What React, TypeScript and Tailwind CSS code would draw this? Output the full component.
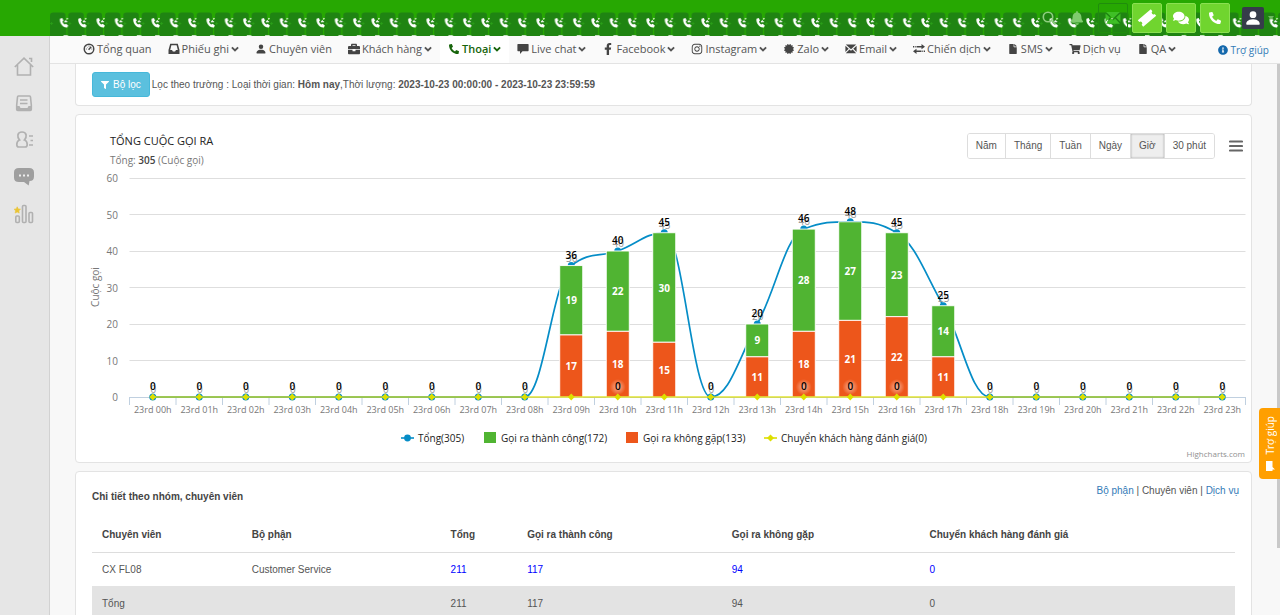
import { useState, type ReactNode } from 'react';
import {
  FaBell,
  FaBriefcase,
  FaCertificate,
  FaComments,
  FaExchangeAlt,
  FaFacebookF,
  FaFile,
  FaFilter,
  FaInfoCircle,
  FaInstagram,
  FaPhoneAlt,
  FaShoppingCart,
} from 'react-icons/fa';
import { BsPersonFill } from 'react-icons/bs';

interface NavItem {
  label: string;
  icon: ReactNode;
  hasMenu?: boolean;
  active?: boolean;
}

interface HourPoint {
  ok: number;
  missed: number;
  showRated: boolean;
}

function GaugeIcon() {
  return (
    <svg viewBox="0 0 12 12" className="w-3 h-3" fill="none" stroke="currentColor">
      <circle cx="6" cy="6" r="4.8" strokeWidth="1.4" />
      <path d="M5.6 6.8 L8.2 3.8" strokeWidth="1.4" />
      <path d="M2.8 6h1 M3.8 3.8l.6.6 M6 2.6v1 M8.4 6h.9" strokeWidth=".9" />
    </svg>
  );
}

function TrayIcon() {
  return (
    <svg viewBox="0 0 12 12" className="w-3 h-3" fill="currentColor" fillRule="evenodd">
      <path d="M2.2.8h7.600L11.500 7v4H.5V7zM3.400 2.200 2.200 7H4l.9 1.600h2.200L8 7h1.800L8.600 2.200z" />
    </svg>
  );
}

function BubbleIcon() {
  return (
    <svg viewBox="0 0 12 12" className="w-3 h-3" fill="currentColor">
      <path d="M1 1h10a.6.6 0 0 1 .6.6v6a.6.6 0 0 1-.6.6H5.5L3 11V8.200H1a.6.6 0 0 1-.6-.6v-6A.6.6 0 0 1 1 1z" />
    </svg>
  );
}

function MailIcon({ className = 'w-3 h-3' }: { className?: string }) {
  return (
    <svg viewBox="0 0 12 12" className={className} fill="currentColor">
      <path d="M.8 1.500h10.400L6 6.300zM.4 2.700l3.300 3L.4 9zM11.600 2.700l-3.300 3L11.600 9zM4.400 6.400 6 7.800l1.600-1.400 3.600 3.900H.8z" />
    </svg>
  );
}

function TransferIcon() {
  return (
    <svg viewBox="0 0 12 12" className="w-3 h-3" fill="currentColor">
      <path d="M3.500 3h5V1L12 3.800 8.500 6.200V4.500h-5zM0 3h1v1.500H0zM1.700 3h1v1.500h-1zM8.500 7.500h-5v-1.700L0 8.300 3.500 11V9h5zM11 7.500h1V9h-1zM9.300 7.500h1V9h-1z" />
    </svg>
  );
}

function ChevronIcon() {
  return (
    <svg viewBox="0 0 8 8" className="w-2 h-2" fill="none" stroke="currentColor" strokeWidth="1.900">
      <path d="M.9 2.400 4 5.500l3.100-3.100" />
    </svg>
  );
}

function TicketIcon() {
  return (
    <svg viewBox="0 0 20 20" className="w-5 h-5" fill="currentColor">
      <path
        transform="rotate(-40 10 10)"
        d="M1.500 5.800h17v2.400a1.800 1.800 0 0 0 0 3.600v2.400h-17v-2.400a1.800 1.800 0 0 0 0-3.600z"
      />
    </svg>
  );
}

// Repeating call tiles behind the right part of the top bar
function HeaderPattern() {
  return (
    <svg className="absolute top-3 right-0 w-[calc(100%-50px)] h-6" aria-hidden="true">
      <defs>
        <pattern id="calls" width="18.33" height="24" patternUnits="userSpaceOnUse">
          <path d="M0 3.500a3 3 0 0 1 3-3h9.500a3 3 0 0 1 3 3V24H0z" fill="#1f8412" />
          <path d="M15.500 8h2.830v16h-2.830z" fill="#1f8412" />
          <path d="M17 14v9" stroke="#27a703" strokeWidth="1.200" />
          <path d="M0 11.500h3M1.500 10v3" stroke="#2a9f17" strokeWidth=".8" />
          <path
            d="M10 6.800l2.200-.8 1.300 2.500-1 1.100c.4 1.400 1.100 2.300 2.300 3l1.300-.8 2.100 1.600-.9 2c-4.200.8-8.100-4.300-7.300-8.600z"
            fill="#fff"
          />
          <path d="M14.600 10.200 16 8.200M15 9.800h2.500M16.800 7.400l.9-1.200" stroke="#fff" strokeWidth="1.100" />
          <path d="M13.500 23.600h4.500" stroke="#e9f6e5" strokeWidth=".9" />
        </pattern>
      </defs>
      <rect width="100%" height="24" fill="url(#calls)" />
    </svg>
  );
}

const NAV_ITEMS: NavItem[] = [
  { label: 'Tổng quan', icon: <GaugeIcon /> },
  { label: 'Phiếu ghi', icon: <TrayIcon />, hasMenu: true },
  { label: 'Chuyên viên', icon: <BsPersonFill className="w-3 h-3" /> },
  { label: 'Khách hàng', icon: <FaBriefcase className="w-3 h-3" />, hasMenu: true },
  { label: 'Thoại', icon: <FaPhoneAlt className="w-3 h-2.5" />, hasMenu: true, active: true },
  { label: 'Live chat', icon: <BubbleIcon />, hasMenu: true },
  { label: 'Facebook', icon: <FaFacebookF className="w-3 h-3" />, hasMenu: true },
  { label: 'Instagram', icon: <FaInstagram className="w-3 h-3" />, hasMenu: true },
  { label: 'Zalo', icon: <FaCertificate className="w-3 h-2.5" />, hasMenu: true },
  { label: 'Email', icon: <MailIcon />, hasMenu: true },
  { label: 'Chiến dịch', icon: <TransferIcon />, hasMenu: true },
  { label: 'SMS', icon: <FaFile className="w-3 h-2.5" />, hasMenu: true },
  { label: 'Dịch vụ', icon: <FaShoppingCart className="w-3 h-2.5" /> },
  { label: 'QA', icon: <FaFile className="w-3 h-2.5" />, hasMenu: true },
];

const RANGES = ['Năm', 'Tháng', 'Tuần', 'Ngày', 'Giờ', '30 phút'];

const CALLS: Record<number, HourPoint> = {
  9: { ok: 19, missed: 17, showRated: false },
  10: { ok: 22, missed: 18, showRated: true },
  11: { ok: 30, missed: 15, showRated: false },
  13: { ok: 9, missed: 11, showRated: false },
  14: { ok: 28, missed: 18, showRated: true },
  15: { ok: 27, missed: 21, showRated: true },
  16: { ok: 23, missed: 22, showRated: true },
  17: { ok: 14, missed: 11, showRated: false },
};

const HOURS = Array.from({ length: 24 }, (_, hour) => ({
  hour,
  ...(CALLS[hour] || { ok: 0, missed: 0, showRated: true }),
}));

const PLOT_LEFT = 53.5;
const PLOT_RIGHT = 1169.5;
const BASE = 232;
const STEP = 46.5;

const xOf = (hour: number) => PLOT_LEFT + STEP * (hour + 0.5);
const yOf = (value: number) => BASE - value * 3.65;

// Smooth curve whose control points never overshoot the neighbours
function splinePath(points: { x: number; y: number }[]) {
  let d = `M ${points[0].x} ${points[0].y}`;
  let prevRight = points[0];

  for (let i = 1; i < points.length; i++) {
    const last = points[i - 1];
    const point = points[i];
    const next = points[i + 1];
    let left = point;
    let right = point;

    if (next) {
      const leftX = (1.5 * point.x + last.x) / 2.5;
      const rightX = (1.5 * point.x + next.x) / 2.5;
      let leftY = (1.5 * point.y + last.y) / 2.5;
      let rightY = (1.5 * point.y + next.y) / 2.5;
      const correction = ((rightY - leftY) * (rightX - point.x)) / (rightX - leftX) + point.y - rightY;
      leftY += correction;
      rightY += correction;

      if (leftY > last.y && leftY > point.y) {
        leftY = Math.max(last.y, point.y);
        rightY = 2 * point.y - leftY;
      } else if (leftY < last.y && leftY < point.y) {
        leftY = Math.min(last.y, point.y);
        rightY = 2 * point.y - leftY;
      }
      if (rightY > next.y && rightY > point.y) {
        rightY = Math.max(next.y, point.y);
        leftY = 2 * point.y - rightY;
      } else if (rightY < next.y && rightY < point.y) {
        rightY = Math.min(next.y, point.y);
        leftY = 2 * point.y - rightY;
      }
      left = { x: leftX, y: leftY };
      right = { x: rightX, y: rightY };
    }

    d += ` C ${prevRight.x} ${prevRight.y} ${left.x} ${left.y} ${point.x} ${point.y}`;
    prevRight = right;
  }
  return d;
}

function CallsChart() {
  const line = splinePath(HOURS.map(({ hour, ok, missed }) => ({ x: xOf(hour), y: yOf(ok + missed) })));

  return (
    <svg
      viewBox="0 0 1175 297"
      className="block w-full h-auto font-['Open_Sans',sans-serif] text-[10px]"
      role="img"
      aria-label="Tổng cuộc gọi ra"
    >
      <defs>
        <radialGradient id="glow">
          <stop offset="0" stopColor="#fff" stopOpacity=".55" />
          <stop offset="1" stopColor="#fff" stopOpacity="0" />
        </radialGradient>
      </defs>

      {/* Grid and value axis */}
      {[0, 10, 20, 30, 40, 50, 60].map((value) => (
        <g key={value}>
          {value > 0 && (
            <path d={`M${PLOT_LEFT} ${Math.floor(yOf(value)) + 0.5}H${PLOT_RIGHT}`} stroke="#dedede" />
          )}
          <text x="42" y={yOf(value) + 4} textAnchor="end" fill="#777">
            {value}
          </text>
        </g>
      ))}
      <text transform="translate(23 122) rotate(-90)" textAnchor="middle" fill="#777">
        Cuộc gọi
      </text>

      {/* Hour axis */}
      <path d={`M${PLOT_LEFT} ${BASE + 0.5}H${PLOT_RIGHT}`} stroke="#c0d0e0" />
      {Array.from({ length: 25 }, (_, i) => (
        <path key={i} d={`M${PLOT_LEFT + i * STEP} ${BASE}v8`} stroke="#c0d0e0" />
      ))}
      <g className="text-[9px]" fill="#777" textAnchor="middle">
        {HOURS.map(({ hour }) => (
          <text key={hour} x={xOf(hour)} y="248">
            {`23rd ${String(hour).padStart(2, '0')}h`}
          </text>
        ))}
      </g>

      {/* Total line */}
      <path d={line} fill="none" stroke="#058dc7" strokeWidth="1.7" />
      {HOURS.map(({ hour, ok, missed }) => (
        <circle key={hour} cx={xOf(hour)} cy={yOf(ok + missed)} r="3.5" fill="#058dc7" />
      ))}

      {/* Stacked bars */}
      {HOURS.filter(({ ok }) => ok > 0).map(({ hour, ok, missed }) => (
        <g key={hour} stroke="#fff" strokeWidth=".9">
          <rect x={xOf(hour) - 11.5} y={yOf(ok + missed)} width="23" height={yOf(missed) - yOf(ok + missed)} fill="#50b432" />
          <rect x={xOf(hour) - 11.5} y={yOf(missed)} width="23" height={BASE - yOf(missed)} fill="#ed561b" />
        </g>
      ))}

      {/* Transferred line */}
      <path d={`M${xOf(0)} ${BASE}H${xOf(23)}`} stroke="#dddf00" strokeWidth="1.7" strokeOpacity=".8" />
      {HOURS.map(({ hour }) => (
        <path key={hour} d={`M${xOf(hour)} ${BASE - 3.4}l3.400 3.400-3.400 3.400-3.400-3.400z`} fill="#dddf00" />
      ))}

      {/* Value labels */}
      {HOURS.map(({ hour, ok, missed, showRated }) => {
        const x = xOf(hour);
        const total = ok + missed;
        return (
          <g key={hour} textAnchor="middle">
            <text x={x + 0.5} y={yOf(total) - 4} fill="#999">
              {total}
            </text>
            <text x={x} y={yOf(total) - 7} fill="#000" fontWeight="600">
              {total}
            </text>
            {ok > 0 && (
              <g fill="#fff" fontWeight="700">
                <text x={x} y={(yOf(total) + yOf(missed)) / 2 + 4}>
                  {ok}
                </text>
                <text x={x} y={(yOf(missed) + BASE) / 2 + 4}>
                  {missed}
                </text>
              </g>
            )}
            {ok > 0 && showRated && (
              <>
                <circle cx={x} cy={BASE - 10} r="8" fill="url(#glow)" />
                <text x={x} y={BASE - 7} fill="#000" fontWeight="600">
                  0
                </text>
              </>
            )}
          </g>
        );
      })}

      {/* Legend */}
      <g fill="#222" fontWeight="500">
        <path d="M325 273h13" stroke="#058dc7" strokeWidth="1.600" />
        <circle cx="331.500" cy="273" r="3.400" fill="#058dc7" />
        <text x="342" y="277">Tổng(305)</text>
        <rect x="408" y="267" width="12" height="11" fill="#50b432" />
        <text x="425" y="277">Gọi ra thành công(172)</text>
        <rect x="550" y="267" width="12" height="11" fill="#ed561b" />
        <text x="567" y="277">Gọi ra không gặp(133)</text>
        <path d="M688 273h13" stroke="#dddf00" strokeWidth="1.600" />
        <path d="M694.500 269.500l3.500 3.500-3.500 3.500-3.500-3.500z" fill="#dddf00" />
        <text x="705" y="277">Chuyển khách hàng đánh giá(0)</text>
      </g>
      <text x="1169" y="292" textAnchor="end" fill="#909090" className="text-[8px]">
        Highcharts.com
      </text>
    </svg>
  );
}

function Sidebar() {
  const link = 'block w-5 h-5';
  return (
    <aside className="w-[50px] shrink-0 bg-[#e6e6e6] border-r border-[#d2d2d2] pt-5 pr-px flex flex-col items-center gap-[17px] text-[#b1b1b1]">
      <a href="#home" aria-label="Trang chủ" className={link}>
        <svg viewBox="0 0 20 20" fill="none" stroke="currentColor" strokeWidth="1.600">
          <path d="M.8 11 10 2.200l9.200 8.800M3.500 9v10h13V9M15 2.500h2.500V6" />
        </svg>
      </a>
      <a href="#inbox" aria-label="Phiếu ghi" className={link}>
        <svg viewBox="0 0 20 20" fill="none" stroke="currentColor" strokeWidth="1.600">
          <path d="M4.500 3h11a1 1 0 0 1 1 1l.8 8v4.500a1 1 0 0 1-1 1H3.700a1 1 0 0 1-1-1V12l.8-8a1 1 0 0 1 1-1zM6 7h7.500M6 10.500h7.500" />
          <path d="M3 13h2.500l1 2h7l1-2H17v4.300H3z" fill="currentColor" stroke="none" />
        </svg>
      </a>
      <a href="#contacts" aria-label="Khách hàng" className={link}>
        <svg viewBox="0 0 20 20" fill="none" stroke="currentColor" strokeWidth="1.700">
          <path d="M5.500 10C3.800 8.500 3.700 6.500 3.900 5c.3-1.800 1.900-3 4.100-3s3.800 1.200 4.100 3c.2 1.500.1 3.500-1.600 5 2.300.8 2.700 2.300 2.700 4.500 0 1.600-.6 2.500-2 2.500H4.800c-1.400 0-2-.9-2-2.500 0-2.200.4-3.700 2.700-4.500zM15 6h4M16.500 10.500H19M15 15h4" />
        </svg>
      </a>
      <a href="#chat" aria-label="Trò chuyện" className={link}>
        <svg viewBox="0 0 20 20">
          <path
            d="M5 1h10c3.500 0 5 1.500 5 4.500v4c0 3-1.500 4.500-4.500 4.500l-.8 4.500L10 15H5c-3.500 0-5-1.500-5-4.500v-5C0 2.500 1.500 1 5 1z"
            fill="#9f9f9f"
          />
          <path d="M5 8.500h2M9 8.500h2M13 8.500h2" stroke="#eee" strokeWidth="1.800" />
        </svg>
      </a>
      <a href="#reports" aria-label="Báo cáo" className={link}>
        <svg viewBox="0 0 20 20" fill="none" stroke="currentColor" strokeWidth="1.600">
          <rect x="1.800" y="12" width="3.500" height="6.500" rx="1" />
          <rect x="8.500" y="1.500" width="3.500" height="17" rx="1" />
          <rect x="15" y="8.500" width="3.500" height="10" rx="1" />
          <path
            d="M3.200 2.800l1 2.100 2.300.3-1.700 1.600.4 2.300-2-1.100-2.100 1.100.5-2.300L0 5.200l2.200-.3z"
            fill="#eac435"
            stroke="#eac435"
            strokeWidth=".6"
          />
        </svg>
      </a>
    </aside>
  );
}

function TopBar() {
  const tile = 'w-[30px] h-[30px] flex items-center justify-center rounded-xs border border-[#8be052] bg-[#70d52f] text-white';
  return (
    <header className="relative h-9 shrink-0 bg-[#27a802]">
      <HeaderPattern />
      <div className="relative h-full flex items-center justify-end pr-1.5">
        <button type="button" aria-label="Tìm kiếm" className="text-[#8fce80] mr-3.5">
          <svg viewBox="0 0 14 14" className="w-3.5 h-3.5" fill="none" stroke="currentColor" strokeWidth="1.600">
            <circle cx="6" cy="6" r="4.700" />
            <path d="M9.500 9.500l4 4" />
          </svg>
        </button>
        <button type="button" aria-label="Thông báo" className="text-[#7fcb6e] mr-3.5">
          <FaBell className="w-3.5 h-3.5" />
        </button>
        <div className="flex gap-1 mr-3">
          <button
            type="button"
            aria-label="Email"
            className="w-[30px] h-[30px] flex items-center justify-center rounded-xs border border-[#1f8d0c] text-[#3fbf26]"
          >
            <MailIcon className="w-4 h-4" />
          </button>
          <button type="button" aria-label="Phiếu ghi" className={tile}>
            <TicketIcon />
          </button>
          <button type="button" aria-label="Trò chuyện" className={tile}>
            <FaComments className="w-4 h-4" />
          </button>
          <button type="button" aria-label="Gọi" className={tile}>
            <FaPhoneAlt className="w-3 h-3" />
          </button>
        </div>
        <button type="button" aria-label="Tài khoản" className="flex items-center gap-1">
          <span className="w-[22px] h-[22px] rounded-xs bg-[#363c4a] text-white flex items-center justify-center">
            <BsPersonFill className="w-[18px] h-[18px]" />
          </span>
          <svg viewBox="0 0 6 4" className="w-1.5 h-1 text-[#6cb85d]" fill="currentColor">
            <path d="M0 0h6L3 4z" />
          </svg>
        </button>
      </div>
    </header>
  );
}

function MainNav() {
  return (
    <nav className="h-7 shrink-0 flex items-stretch bg-[#fafafa] border-b border-[#e3e3e3] pl-[25px] pr-[11px] font-['Open_Sans',sans-serif] text-[11px] text-[#555]">
      {NAV_ITEMS.map((item) => (
        <a
          key={item.label}
          href="#nav"
          className={`flex items-center gap-0.5 px-2 pb-px whitespace-nowrap ${
            item.active ? 'bg-white text-[#17640b] font-semibold' : ''
          }`}
        >
          <span className={item.active ? '' : 'text-[#444]'}>{item.icon}</span>
          {item.label}
          {item.hasMenu && <ChevronIcon />}
        </a>
      ))}
      <a href="#help" className="ml-auto flex items-center gap-0.5 text-[10px] text-[#337ab7] whitespace-nowrap">
        <FaInfoCircle className="w-2.5 h-2.5 text-[#1468ac]" />
        Trợ giúp
      </a>
    </nav>
  );
}

export default function App() {
  const [range, setRange] = useState('Giờ');
  const card = 'bg-white border border-[#e3e3e3]';
  const numberLink = 'text-[#0000ff]';

  return (
    <div className="relative h-screen flex flex-col overflow-hidden bg-[#f8f8f8] font-['Liberation_Sans',Arial,sans-serif] text-[10px] leading-4 text-[#555]">
      <TopBar />
      <div className="flex flex-1 min-h-0">
        <Sidebar />
        <div className="flex flex-col flex-1 min-w-0">
          <MainNav />
          <main className="flex-1 min-h-0 overflow-hidden pl-[25px] pr-7">
            {/* Filter */}
            <section className={`${card} border-t-0 rounded-b px-4 py-2 flex items-center gap-0.5`}>
              <button
                type="button"
                className="h-[25px] px-2 flex items-center gap-1 rounded-[3px] bg-[#5bc0de] border border-[#46b8da] text-white"
              >
                <FaFilter className="w-2 h-2" />
                Bộ lọc
              </button>
              <p>
                Lọc theo trường : Loại thời gian: <b>Hôm nay</b>,Thời lượng:{' '}
                <b>2023-10-23 00:00:00 - 2023-10-23 23:59:59</b>
              </p>
            </section>

            {/* Chart */}
            <section className={`${card} rounded mt-2`}>
              <div className="h-[50px] flex items-start justify-between pl-[34px] pr-2 pt-[18px]">
                <div className="font-['Open_Sans',sans-serif] text-[#777]">
                  <h2 className="text-[11px] font-medium text-[#222]">TỔNG CUỘC GỌI RA</h2>
                  <p className="mt-[3px]">
                    Tổng: <b className="font-semibold text-[#444]">305</b> (Cuộc gọi)
                  </p>
                </div>
                <div className="flex items-center gap-3.5">
                  <div className="flex h-[26px] rounded-[3px] border border-[#ddd] overflow-hidden divide-x divide-[#ddd]">
                    {RANGES.map((item) => (
                      <button
                        key={item}
                        type="button"
                        onClick={() => setRange(item)}
                        className={`px-2 ${item === range ? 'bg-[#eee] shadow-[inset_0_0_2px_#999]' : 'bg-white'}`}
                      >
                        {item}
                      </button>
                    ))}
                  </div>
                  <button type="button" aria-label="Menu biểu đồ">
                    <svg viewBox="0 0 14 12" className="w-3.5 h-3" stroke="#666" strokeWidth="2.200" strokeLinecap="round">
                      <path d="M1 1.500h12M1 6h12M1 10.500h12" />
                    </svg>
                  </button>
                </div>
              </div>
              <CallsChart />
            </section>

            {/* Detail table */}
            <section className={`${card} rounded mt-2 px-4 pb-4`}>
              <div className="flex justify-between items-start pt-[11px] h-[45px]">
                <h3 className="font-bold text-[#444] mt-1.5">Chi tiết theo nhóm, chuyên viên</h3>
                <p className="-mr-1">
                  <a href="#department" className="text-[#337ab7]">Bộ phận</a>
                  {' | Chuyên viên | '}
                  <a href="#service" className="text-[#337ab7]">Dịch vụ</a>
                </p>
              </div>
              <table className="w-full table-fixed text-left [&_td]:px-2.5 [&_th]:px-2.5 [&_td]:pt-px [&_th]:pt-0.5">
                <colgroup>
                  <col className="w-[13.1%]" />
                  <col className="w-[17.4%]" />
                  <col className="w-[6.7%]" />
                  <col className="w-[17.9%]" />
                  <col className="w-[17.3%]" />
                  <col />
                </colgroup>
                <thead>
                  <tr className="h-[35px] border-b border-[#ddd] text-[#444]">
                    <th>Chuyên viên</th>
                    <th>Bộ phận</th>
                    <th>Tổng</th>
                    <th>Gọi ra thành công</th>
                    <th>Gọi ra không gặp</th>
                    <th>Chuyển khách hàng đánh giá</th>
                  </tr>
                </thead>
                <tbody>
                  <tr className="h-[34px]">
                    <td>CX FL08</td>
                    <td>Customer Service</td>
                    <td><a href="#total" className={numberLink}>211</a></td>
                    <td><a href="#ok" className={numberLink}>117</a></td>
                    <td><a href="#missed" className={numberLink}>94</a></td>
                    <td><a href="#rated" className={numberLink}>0</a></td>
                  </tr>
                  <tr className="h-[34px] bg-[#e3e3e3]">
                    <td>Tổng</td>
                    <td></td>
                    <td>211</td>
                    <td>117</td>
                    <td>94</td>
                    <td>0</td>
                  </tr>
                </tbody>
              </table>
            </section>
          </main>
        </div>
      </div>

      {/* Scroll thumb and floating help tab */}
      <div className="absolute right-0 top-16 w-[3px] h-[484px] bg-[#c9c9c9]" />
      <button
        type="button"
        className="absolute right-0 top-[408px] w-[21px] h-[71px] rounded-l-[4px] bg-[#ff9f00] text-white flex flex-col items-center justify-center gap-1.5 font-['Open_Sans',sans-serif]"
      >
        <span className="[writing-mode:vertical-rl] rotate-180">Trợ giúp</span>
        <svg viewBox="0 0 10 10" className="w-2.5 h-2.5" fill="currentColor">
          <path d="M1 0h6.500v6L10 8.500H7.500V10H1z" />
        </svg>
      </button>
    </div>
  );
}
